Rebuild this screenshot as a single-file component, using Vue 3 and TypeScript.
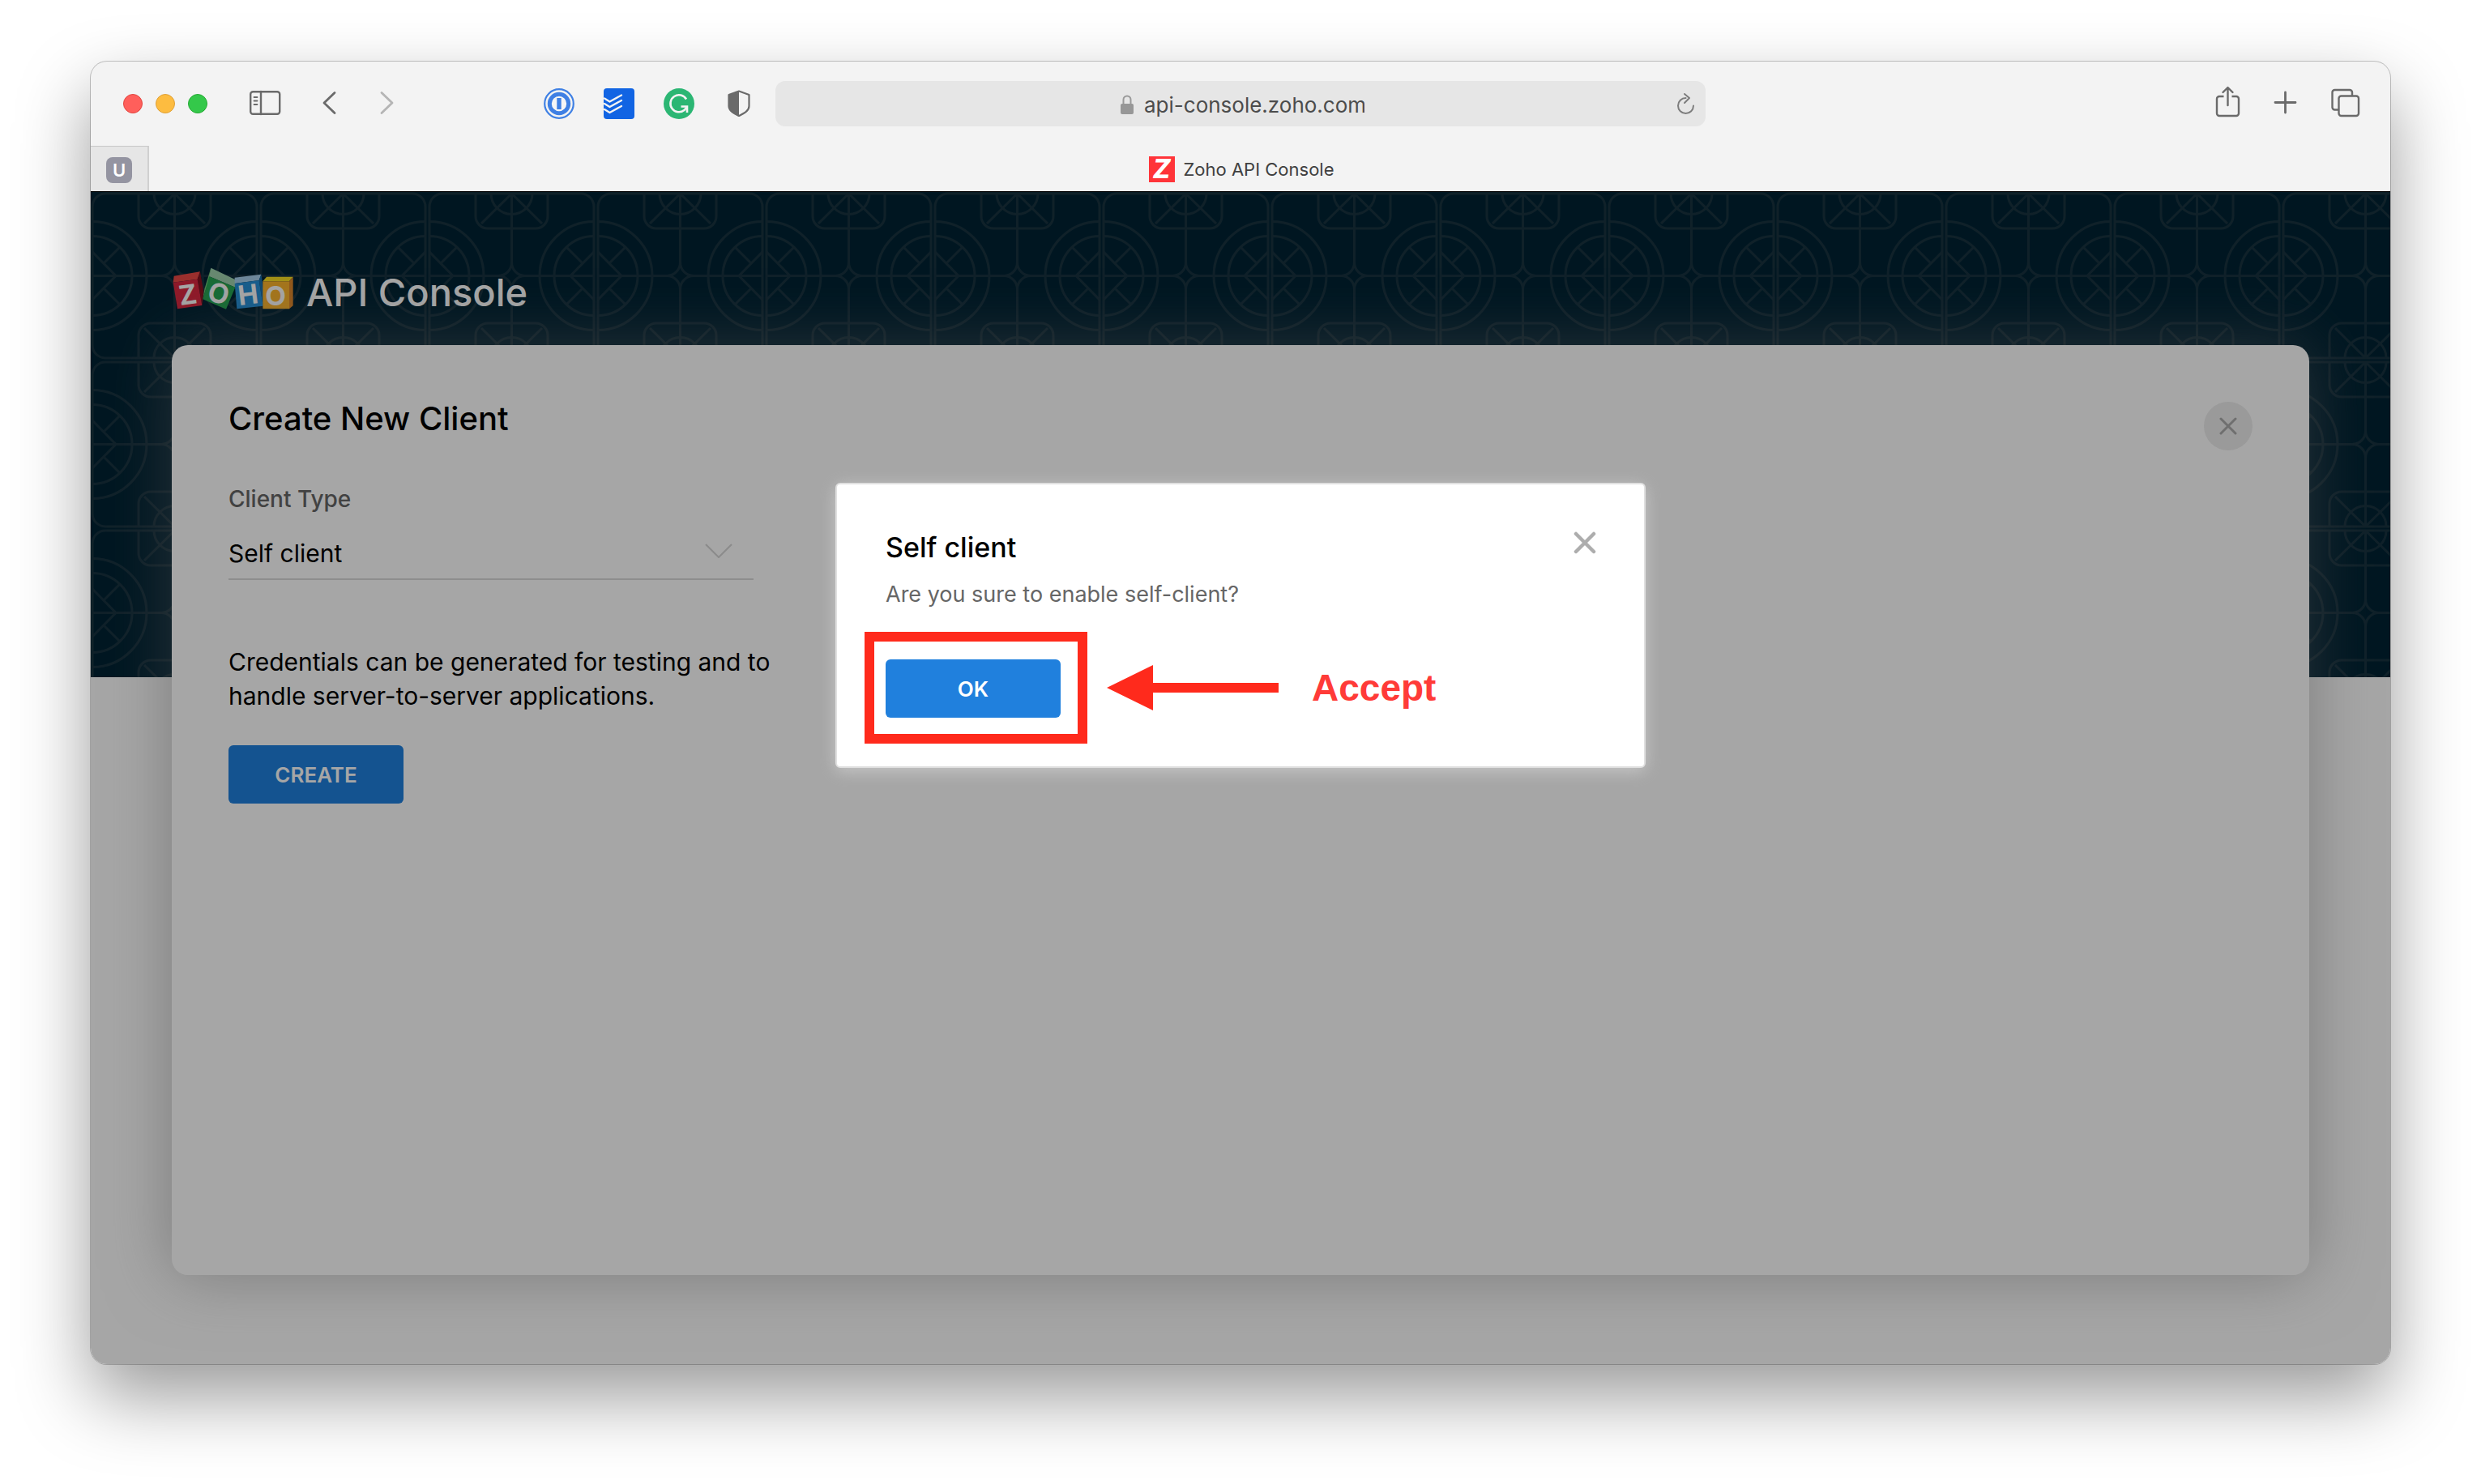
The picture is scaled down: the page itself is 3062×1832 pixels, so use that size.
<script setup lang="ts">
import { ref } from 'vue'

const address = ref('api-console.zoho.com')
const clientType = ref('Self client')
const clientTypes: string[] = ['Self client']
const halves: string[] = ['', 'translate(207 0) scale(-1 1)']
const ends: string[] = ['', 'translate(0 207) scale(1 -1)']
</script>

<template>
  <div class="desktop">
    <div class="window">
      <header class="toolbar">
        <div class="side side-left">
          <div class="lights">
            <button class="light red" aria-label="Close window"></button>
            <button class="light amber" aria-label="Minimise window"></button>
            <button class="light green" aria-label="Zoom window"></button>
          </div>
          <button class="icon-btn sidebar-btn" aria-label="Show sidebar">
            <svg viewBox="0 0 40 40" fill="none" stroke="#6a6a6a" stroke-width="2.4" stroke-linecap="round">
              <rect x="1.2" y="5.2" width="36" height="27.6" rx="3" />
              <path d="M14 5v28" />
              <path d="M5.5 12h4M5.5 16.5h4M5.5 21h4" stroke-width="1.8" />
            </svg>
          </button>
          <button class="icon-btn" aria-label="Back">
            <svg viewBox="0 0 40 40" fill="none" stroke="#6a6a6a" stroke-width="2.8" stroke-linecap="round" stroke-linejoin="round">
              <path d="M27 6.5 14 19l13 12.5" />
            </svg>
          </button>
          <button class="icon-btn" aria-label="Forward">
            <svg viewBox="0 0 40 40" fill="none" stroke="#b5b5b5" stroke-width="2.8" stroke-linecap="round" stroke-linejoin="round">
              <path d="M13 6.5 26 19 13 31.5" />
            </svg>
          </button>
          <div class="extensions">
            <button class="icon-btn" aria-label="Password manager">
              <svg viewBox="0 0 40 40" fill="none">
                <circle cx="19" cy="20" r="17.8" stroke="#3f80e4" stroke-width="2.2" />
                <circle cx="19" cy="20" r="11.7" fill="#f6f6f6" stroke="#3f80e4" stroke-width="5" />
                <rect x="16.3" y="13" width="5.4" height="14" fill="#3f80e4" />
              </svg>
            </button>
            <button class="icon-btn" aria-label="Task list">
              <svg viewBox="0 0 40 40" fill="none">
                <rect x="0" y="1" width="38" height="38" rx="4" fill="#1164e3" />
                <g stroke="#f3f3f3" stroke-width="2.3" stroke-linecap="round" stroke-linejoin="round">
                  <path d="M1 13.5l6.5 4L22 9.500" />
                  <path d="M1 20l6.5 4L22 16" />
                  <path d="M1 27l6.5 4L22 23" />
                </g>
              </svg>
            </button>
            <button class="icon-btn" aria-label="Writing assistant">
              <svg viewBox="0 0 40 40" fill="none">
                <circle cx="19" cy="20" r="19" fill="#2bb673" />
                <path d="M28 14.5A10.5 10.5 0 1 0 25.5 28l3-3.5" stroke="#f3f3f3" stroke-width="2.6" />
                <path d="M21.5 23.5H29V31" stroke="#f3f3f3" stroke-width="2.6" />
              </svg>
            </button>
            <button class="icon-btn" aria-label="Privacy report">
              <svg viewBox="0 0 40 40">
                <path d="M19 4.500 31.5 9v14c0 6-6.5 9-12.500 12C13 32 6.5 29 6.5 23V9Z" fill="none" stroke="#6a6a6a" stroke-width="2.2" stroke-linejoin="round" />
                <path d="M19 4.500V35C13 32 6.5 29 6.5 23V9Z" fill="#6a6a6a" />
              </svg>
            </button>
          </div>
        </div>

        <div class="address-bar">
          <span></span>
          <div class="address">
            <svg class="lock" viewBox="0 0 18 26">
              <path d="M4.5 12V7a4.5 4.5 0 0 1 9 0v5" fill="none" stroke="#9a9a9a" stroke-width="2" />
              <rect x="1" y="12" width="16" height="13" rx="2" fill="#979797" />
            </svg>
            <input v-model="address" class="address-input" type="text" aria-label="Address" />
          </div>
          <button class="reload" aria-label="Reload">
            <svg viewBox="0 0 28 30" fill="none" stroke="#7d7d7d" stroke-width="2" stroke-linecap="round" stroke-linejoin="round">
              <path d="M13.5 8A9.5 9.5 0 1 0 23 17.500" />
              <path d="M12 3l6 5-6 6" />
            </svg>
          </button>
        </div>

        <div class="side side-right">
          <button class="icon-btn" aria-label="Share">
            <svg viewBox="0 0 40 40" fill="none" stroke="#6a6a6a" stroke-width="2.4" stroke-linecap="round" stroke-linejoin="round">
              <path d="M14.5 11H9a3 3 0 0 0-3 3v18a3 3 0 0 0 3 3h21a3 3 0 0 0 3-3V14a3 3 0 0 0-3-3h-5.5" stroke-linecap="butt" />
              <path d="M19.5 22V1M13.5 6l6-6 6 6" />
            </svg>
          </button>
          <button class="icon-btn" aria-label="New tab">
            <svg viewBox="0 0 40 40" fill="none" stroke="#6a6a6a" stroke-width="2.8" stroke-linecap="round">
              <path d="M18.5 6v25M6 18.5h25" />
            </svg>
          </button>
          <button class="icon-btn" aria-label="Tab overview">
            <svg viewBox="0 0 40 40" fill="none" stroke="#6a6a6a" stroke-width="2.4">
              <path d="M12 27.5H7.5a3 3 0 0 1-3-3V6a3 3 0 0 1 3-3H26a3 3 0 0 1 3 3v4" />
              <rect x="12.5" y="10.5" width="24.5" height="24.5" rx="3" />
            </svg>
          </button>
        </div>
      </header>

      <nav class="tabs" aria-label="Tabs">
        <button class="pinned-tab" aria-label="Pinned tab"><span class="tile">U</span></button>
        <button class="tab"><span class="favicon">Z</span>Zoho API Console</button>
      </nav>

      <main class="page">
        <div class="banner">
          <svg width="100%" height="100%">
            <defs>
              <pattern id="lattice" width="208" height="208" patternUnits="userSpaceOnUse">
                <g fill="none" stroke="#193340" stroke-width="3">
                  <rect x="2" y="2" width="203" height="203" rx="16" />
                  <g v-for="end in ends" :key="end" :transform="end">
                    <path d="M59 2v28a15 15 0 0 0 15 15h59a15 15 0 0 0 15-15V2" />
                    <path d="M78 2a25.5 25.5 0 0 0 51 0M103.5 2v85M103.5 2 66 39M103.5 2 141 39" />
                  </g>
                  <g v-for="half in halves" :key="half" :transform="half">
                    <path d="M2 36.5a67 67 0 0 1 0 134M2 54.5a49 49 0 0 1 0 98" />
                    <path d="M2 74l29 29.5L2 133M36 68 17 87M36 139 17 120M2 103.5h85" />
                    <path d="M87 103.5a16.5 16.5 0 0 0 16.5-16.5M87 103.5a16.5 16.5 0 0 1 16.5 16.5" />
                  </g>
                </g>
              </pattern>
            </defs>
            <rect width="100%" height="100%" fill="url(#lattice)" />
          </svg>
        </div>

        <div class="brand">
          <svg class="logo" viewBox="40 60 450 162" role="img" aria-label="Zoho">
            <polygon points="45,92 142,76 132,104 42,116" fill="#ee4a46" />
            <polygon points="142,76 155,150 149,201 132,104" fill="#8a1220" />
            <polygon points="42,116 132,104 149,201 58,214" fill="#dc2840" />
            <polygon points="182,62 178,94 152,178 158,140" fill="#6fc474" />
            <polygon points="182,62 273,106 272,134 176,94" fill="#9fd2ae" />
            <polygon points="176,94 272,134 238,215 152,178" fill="#26a653" />
            <polygon points="270,98 368,86 360,108 270,120" fill="#a9d0ee" />
            <polygon points="368,86 378,150 375,203 360,108" fill="#176fae" />
            <polygon points="270,120 360,108 375,203 278,214" fill="#2590d8" />
            <polygon points="388,95 486,95 472,112 374,112" fill="#fbe024" />
            <polygon points="486,95 486,202 472,214 472,112" fill="#e0872a" />
            <polygon points="374,112 472,112 472,214 374,214" fill="#fdb52c" />
            <g class="logo-letters" text-anchor="middle" fill="#fff">
              <text x="96" y="197" transform="rotate(-8 96 160)">Z</text>
              <text x="212" y="192" transform="rotate(18 212 153)">O</text>
              <text x="319" y="197" transform="rotate(-7 319 160)">H</text>
              <text x="421" y="201">O</text>
            </g>
          </svg>
          <span class="brand-name">API Console</span>
        </div>

        <section class="card">
          <div class="form">
            <h1>Create New Client</h1>
            <label for="client-type">Client Type</label>
            <div class="select-wrap">
              <select id="client-type" v-model="clientType">
                <option v-for="t in clientTypes" :key="t">{{ t }}</option>
              </select>
              <svg class="chevron" viewBox="0 0 34 18" fill="none" stroke="#d6d6d6" stroke-width="2">
                <path d="M1 1l16 16L33 1" />
              </svg>
            </div>
            <p>Credentials can be generated for testing and to<br />handle server-to-server applications.</p>
            <button class="primary">CREATE</button>
          </div>
          <button class="card-close" aria-label="Close form">
            <svg viewBox="0 0 22 22" fill="none" stroke="#ababab" stroke-width="3" stroke-linecap="round">
              <path d="M2 2l18 18M20 2 2 20" />
            </svg>
          </button>
        </section>

        <div class="overlay">
          <div class="modal" role="dialog" aria-labelledby="modal-title">
            <h2 id="modal-title">Self client</h2>
            <p>Are you sure to enable self-client?</p>
            <div class="actions">
              <div class="highlight">
                <button class="primary">OK</button>
              </div>
              <svg class="arrow" viewBox="0 0 212 58" fill="#ff2a1c">
                <polygon points="0,28 57,0 57,22 212,22 212,34 57,34 57,56" />
              </svg>
              <strong>Accept</strong>
            </div>
            <button class="modal-close" aria-label="Close dialog">
              <svg viewBox="0 0 28 28" fill="none" stroke="#adadad" stroke-width="4.500" stroke-linecap="round">
                <path d="M3 3l22 22M25 3 3 25" />
              </svg>
            </button>
          </div>
        </div>
      </main>
    </div>
  </div>
</template>

<style>
body {
  margin: 0;
  background: #fff;
}
</style>

<style scoped>
* {
  box-sizing: border-box;
}
button,
input,
select {
  font: inherit;
  color: inherit;
  border: 0;
  padding: 0;
  margin: 0;
  background: none;
}
svg {
  display: block;
}
.desktop {
  min-height: 100vh;
  padding: 76px 112px 148px;
  display: flex;
  font-family: Inter, 'Liberation Sans', sans-serif;
  color: #000;
}
.window {
  flex: 1;
  min-width: 0;
  display: flex;
  flex-direction: column;
  border-radius: 20px;
  overflow: hidden;
  background: #f3f3f3;
  box-shadow: 0 0 0 1px rgba(0, 0, 0, 0.22), 0 40px 90px rgba(0, 0, 0, 0.4);
}

.toolbar {
  height: 104px;
  display: grid;
  grid-template-columns: minmax(0, 845fr) minmax(0, 1148fr) minmax(0, 845fr);
  align-items: center;
}
.side {
  display: flex;
  align-items: center;
}
.side-left {
  padding: 0 24px 0 40px;
}
.side-right {
  justify-content: flex-end;
  gap: 32px;
  padding-right: 36px;
}
.lights {
  display: flex;
  gap: 16px;
  margin-right: 52px;
}
.light {
  width: 24px;
  height: 24px;
  border-radius: 50%;
}
.red {
  background: #ff5f5b;
  border: 1px solid #e24640;
}
.amber {
  background: #fdbc40;
  border: 1px solid #dfa036;
}
.green {
  background: #34c84a;
  border: 1px solid #27aa35;
}
.icon-btn,
.icon-btn svg {
  width: 40px;
  height: 40px;
  flex: none;
  overflow: visible;
}
.sidebar-btn {
  margin-right: 6px;
}
.icon-btn + .icon-btn {
  margin-left: 32px;
}
.side-right .icon-btn + .icon-btn,
.extensions .icon-btn + .icon-btn {
  margin-left: 0;
}
.extensions {
  display: flex;
  gap: 34px;
  margin-left: auto;
}
.address-bar {
  height: 56px;
  border-radius: 12px;
  background: #e6e6e6;
  display: grid;
  grid-template-columns: 1fr auto 1fr;
  align-items: center;
}
.address {
  display: flex;
  align-items: center;
  gap: 12px;
  padding: 2px 0 0 4px;
}
.lock {
  width: 18px;
  height: 26px;
}
.address-input {
  width: 272px;
  height: 40px;
  font-size: 26px;
  color: #4c4c4c;
}
.reload {
  width: 28px;
  height: 30px;
  justify-self: end;
  margin-right: 10px;
}

.tabs {
  height: 56px;
  display: flex;
}
.pinned-tab {
  width: 72px;
  display: grid;
  place-items: center;
  padding-top: 2px;
  background: #e6e6e6;
  border-top: 1px solid #c8c8c8;
  border-right: 2px solid #d0d0d0;
}
.tile,
.favicon {
  width: 32px;
  height: 32px;
  line-height: 32px;
  text-align: center;
  color: #fff;
}
.tile {
  border-radius: 8px;
  background: #9494a1;
  font-size: 22px;
  font-weight: 600;
}
.favicon {
  background: #ff3439;
  font-size: 32px;
  font-weight: 800;
  font-style: italic;
}
.tab {
  flex: 1;
  display: flex;
  align-items: center;
  justify-content: center;
  gap: 11px;
  padding: 2px 70px 0 0;
  font-size: 22px;
  color: #404040;
}

.page {
  position: relative;
  flex: 1;
  display: flex;
  flex-direction: column;
  padding: 90px 100px 110px;
  background: #fff;
}
.banner {
  position: absolute;
  inset: 0 0 auto;
  height: 600px;
  background: #002334;
  border-top: 1px solid #000;
}
.brand {
  position: relative;
  display: flex;
  align-items: flex-start;
  height: 100px;
}
.logo {
  width: 152px;
  height: 54px;
  margin-top: 4px;
}
.logo-letters {
  font-size: 100px;
  font-weight: 700;
}
.brand-name {
  margin-left: 14px;
  line-height: 70px;
  font-size: 47px;
  font-weight: 500;
  color: #fff;
}
.card {
  position: relative;
  flex: 1;
  display: flex;
  justify-content: space-between;
  align-items: flex-start;
  padding: 70px;
  border-radius: 20px;
  background: #fff;
  box-shadow: 0 0 80px rgba(125, 125, 125, 0.5);
}
.form {
  width: 672px;
}
h1,
h2,
p {
  margin: 0;
}
h1 {
  font-size: 40px;
  line-height: 42px;
  font-weight: 500;
}
label {
  display: block;
  margin-top: 62px;
  font-size: 28px;
  line-height: 32px;
  font-weight: 500;
  color: #666;
}
.select-wrap {
  position: relative;
  width: 648px;
  margin-top: 16px;
}
select {
  width: 100%;
  height: 68px;
  padding-top: 4px;
  appearance: none;
  border-bottom: 2px solid #d9d9d9;
  border-radius: 0;
  font-size: 30px;
}
.chevron {
  position: absolute;
  right: 26px;
  top: 23px;
  width: 34px;
  height: 18px;
}
.form p {
  margin: 80px 0 40px;
  font-size: 30px;
  line-height: 42px;
  white-space: nowrap;
}
.primary {
  display: block;
  width: 216px;
  height: 72px;
  border-radius: 6px;
  background: #2080dd;
  color: #fff;
  font-size: 26px;
  font-weight: 600;
}
.card-close {
  width: 60px;
  height: 60px;
  border-radius: 50%;
  background: #ededed;
  display: grid;
  place-items: center;
}
.card-close svg {
  width: 22px;
  height: 22px;
}
.overlay {
  position: absolute;
  inset: 0;
  display: flex;
  justify-content: center;
  align-items: flex-start;
  padding-top: 360px;
  background: rgba(0, 0, 0, 0.35);
}
.modal {
  position: relative;
  width: 1000px;
  padding: 58px 60px 60px;
  border: 2px solid #e0e0e0;
  border-radius: 6px;
  background: #fff;
  box-shadow: 0 4px 20px rgba(221, 221, 221, 0.6);
}
h2 {
  font-size: 34px;
  line-height: 40px;
  font-weight: 500;
}
.modal p {
  margin-top: 22px;
  font-size: 27px;
  line-height: 32px;
  color: #666;
}
.actions {
  display: flex;
  align-items: center;
  margin-top: 64px;
}
.highlight {
  position: relative;
}
.highlight::before {
  content: '';
  position: absolute;
  inset: -34px -33px -32px -26px;
  border: 12px solid #ff2a1c;
  pointer-events: none;
}
.arrow {
  width: 212px;
  height: 58px;
  margin: 0 41px 0 57px;
}
.actions strong {
  padding-bottom: 2px;
  font-family: 'Liberation Sans', sans-serif;
  font-size: 46px;
  line-height: 56px;
  color: #ff3b38;
}
.modal-close {
  position: absolute;
  top: 58px;
  right: 59px;
  width: 28px;
  height: 28px;
}
</style>
